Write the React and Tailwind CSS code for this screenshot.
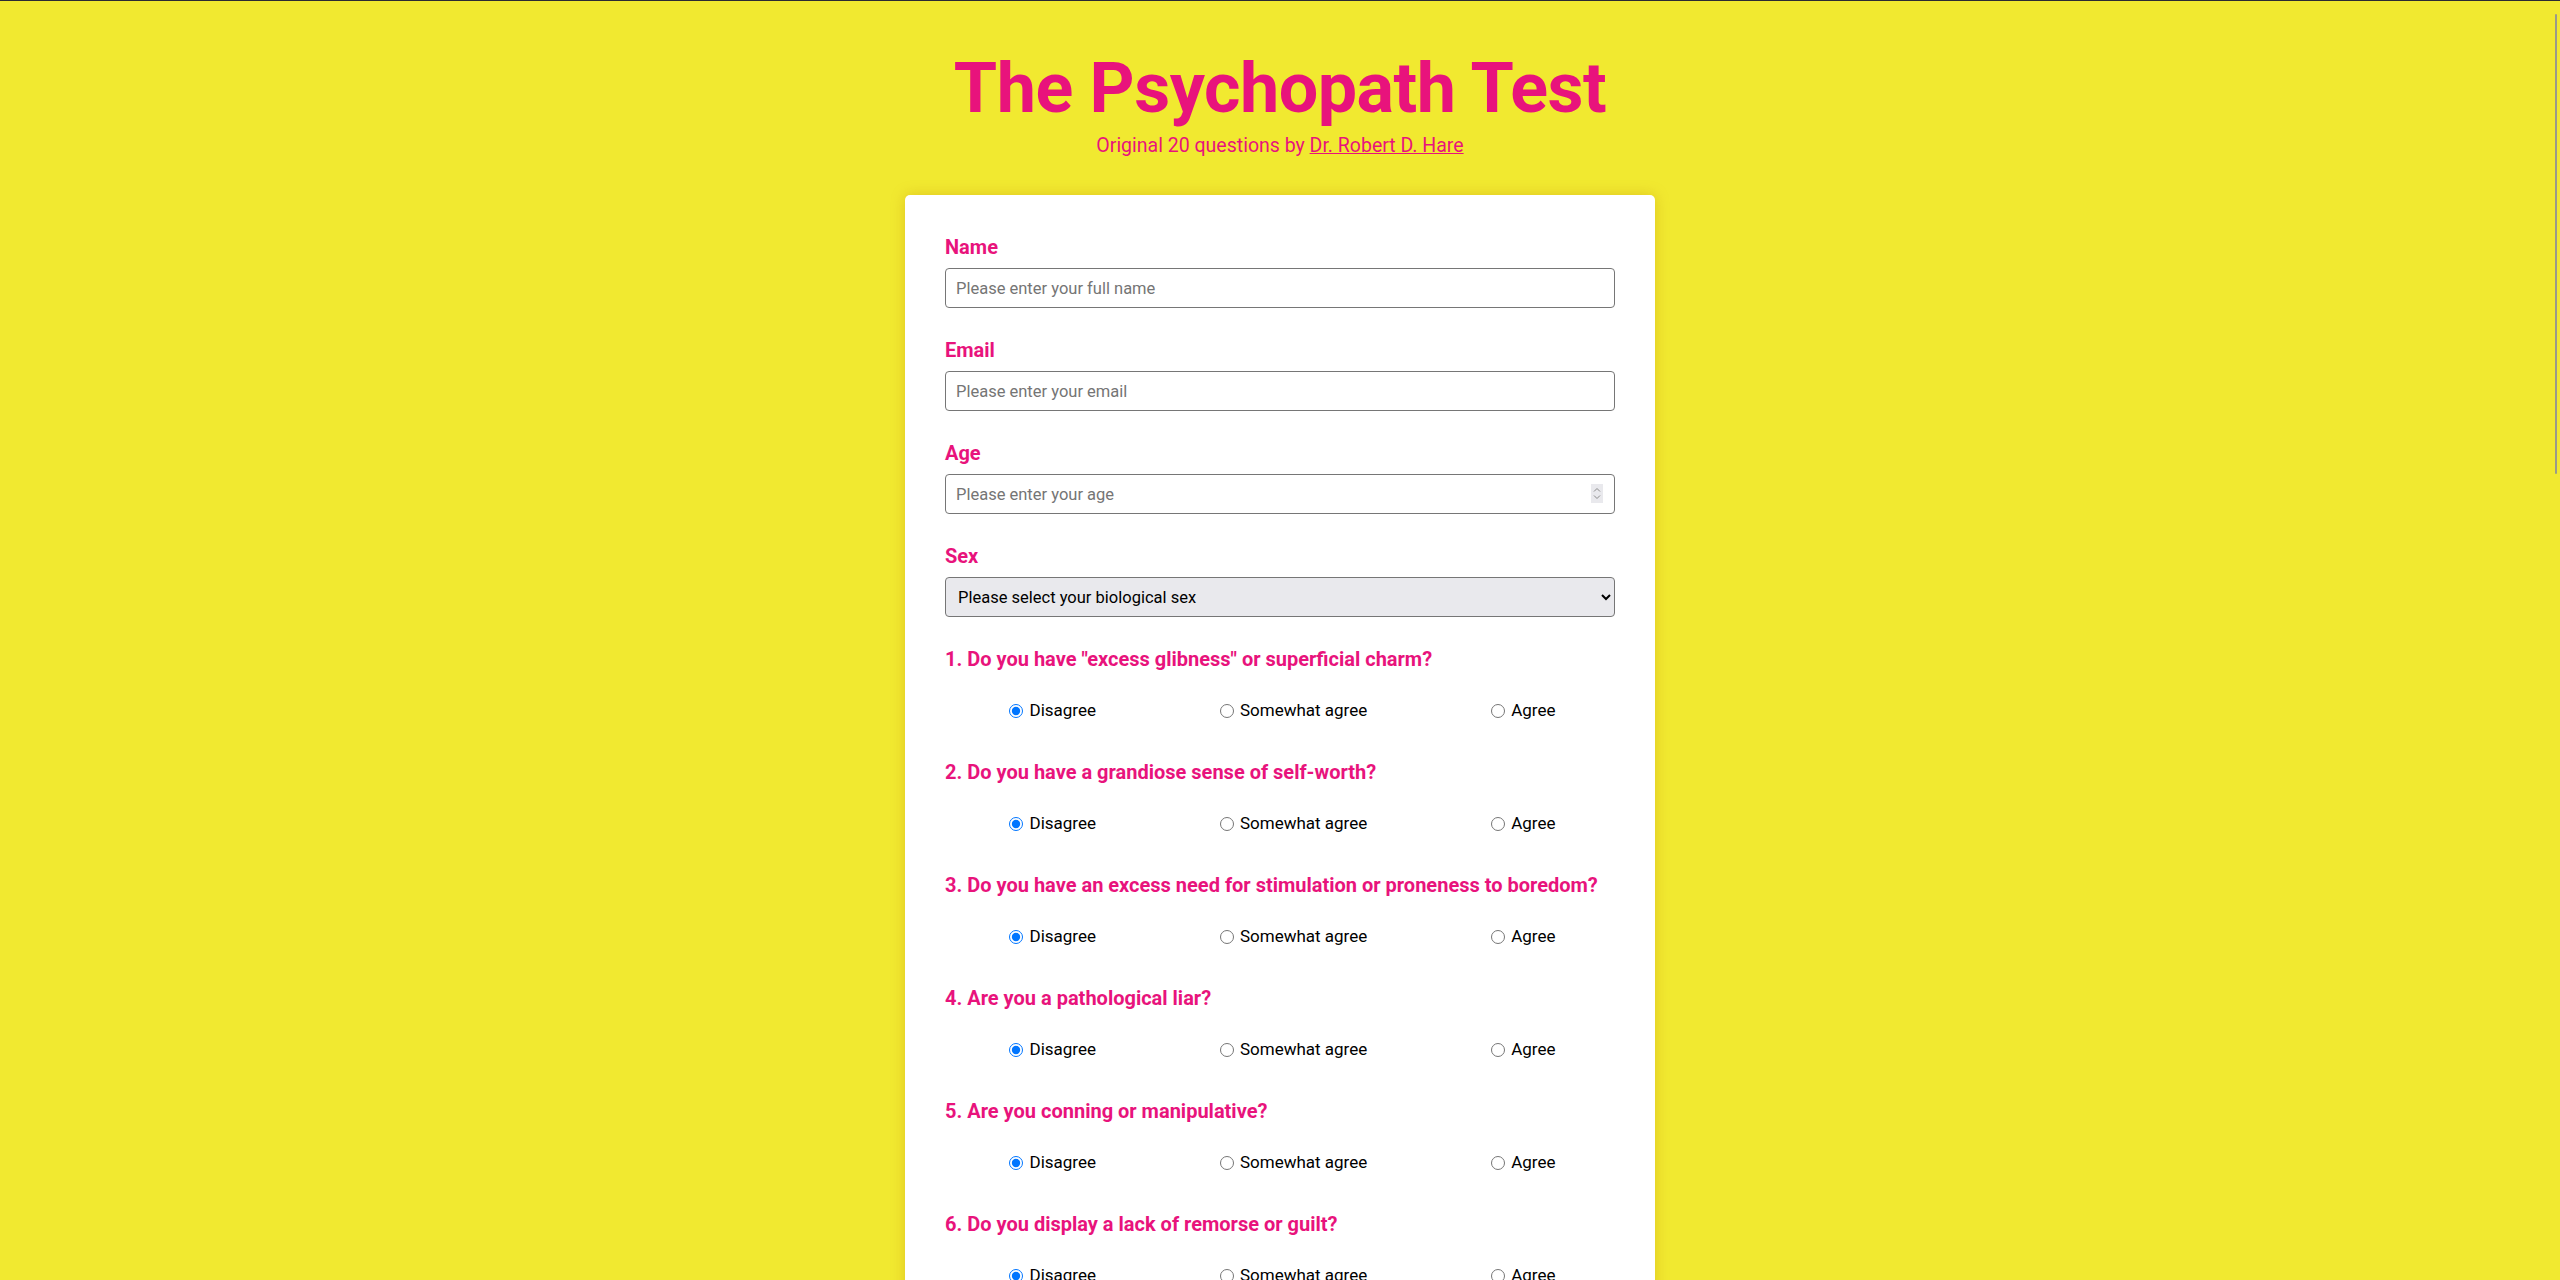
import { useState } from 'react';

const questions = [
    'Do you have "excess glibness" or superficial charm?',
    'Do you have a grandiose sense of self-worth?',
    'Do you have an excess need for stimulation or proneness to boredom?',
    'Are you a pathological liar?',
    'Are you conning or manipulative?',
    'Do you display a lack of remorse or guilt?',
    'Do you have shallow emotional responses?',
    'Are you callous or lacking empathy?',
    'Do you have a parasitic lifestyle?',
    'Do you have poor behavioral controls?',
    'Are you sexually promiscuous?',
    'Did you have early behavior problems?',
    'Do you lack realistic long-term goals?',
    'Are you impulsive?',
    'Are you irresponsible?',
    'Do you fail to accept responsibility for your own actions?',
    'Have you had many short-term marital relationships?',
    'Were you a juvenile delinquent?',
    'Have you had your conditional release revoked?',
    'Do you have criminal versatility?',
];

const options = ['Disagree', 'Somewhat agree', 'Agree'];

function Field({ label, children }) {
    return (
        <div className="mb-[31px]">
            <label className="block text-[20px] leading-[22px] font-bold text-[#e8137c] mb-[10px]">{label}</label>
            {children}
        </div>
    );
}

export default function App() {
    const [answers, setAnswers] = useState(() => questions.map(() => 0));

    const inputClass =
        'w-full h-[40px] px-[10px] rounded-[4px] border border-[#767676] bg-white text-[16.5px] text-black placeholder:text-[#757575] outline-none';

    return (
        <div
            className="relative h-screen overflow-hidden bg-[#f1e930] border-t border-[#2b2a33]"
            style={{ fontFamily: 'Roboto, "Noto Sans", sans-serif' }}
        >
            {/* fake overlay scrollbar */}
            <div className="absolute right-[3px] top-[13px] w-[2px] h-[460px] bg-[#9a9a8a] rounded-full" />

            <div className="flex flex-col items-center pt-[47px] pb-20">
                <h1 className="text-[70px] leading-[80px] font-bold text-[#e8137c] tracking-[-0.5px]">The Psychopath Test</h1>
                <p className="mt-[6px] text-[19.5px] leading-[24px] text-[#e8137c]">
                    Original 20 questions by <a href="#" className="underline">Dr. Robert D. Hare</a>
                </p>

                <form className="mt-[37px] w-[750px] bg-white rounded-[5px] px-[40px] pt-[41px] pb-10 shadow-[0_0_14px_rgba(190,130,0,0.35)]">
                    <Field label="Name">
                        <input type="text" className={inputClass} placeholder="Please enter your full name" />
                    </Field>
                    <Field label="Email">
                        <input type="email" className={inputClass} placeholder="Please enter your email" />
                    </Field>
                    <Field label="Age">
                        <div className="relative">
                            <input
                                type="number"
                                className={`${inputClass} [appearance:textfield] [&::-webkit-inner-spin-button]:appearance-none [&::-webkit-outer-spin-button]:appearance-none`}
                                placeholder="Please enter your age"
                            />
                            {/* spinner */}
                            <div className="absolute right-[12px] top-[10px] w-[12px] h-[19px] bg-[#e9e9ed] flex flex-col items-center justify-center gap-[3px]">
                                <svg width="8" height="5" viewBox="0 0 8 5" fill="none" stroke="#8a8a8a" strokeWidth="1">
                                    <path d="M1 4.5L4 1.5L7 4.5" />
                                </svg>
                                <svg width="8" height="5" viewBox="0 0 8 5" fill="none" stroke="#8a8a8a" strokeWidth="1">
                                    <path d="M1 0.5L4 3.5L7 0.5" />
                                </svg>
                            </div>
                        </div>
                    </Field>
                    <Field label="Sex">
                        <select className="w-full h-[40px] px-[8px] rounded-[4px] border border-[#767676] bg-[#e9e9ed] text-[16.5px] text-black">
                            <option>Please select your biological sex</option>
                            <option>Male</option>
                            <option>Female</option>
                        </select>
                    </Field>

                    {questions.map((q, i) => (
                        <div key={i} className="mb-[39px]">
                            <h3 className="text-[20px] leading-[22px] font-bold text-[#e8137c] mb-[30px]">
                                {i + 1}. {q}
                            </h3>
                            <div className="flex justify-around h-[22px] items-center">
                                {options.map((o, j) => (
                                    <label key={o} className="flex items-center gap-[6px] text-[17px] text-black">
                                        <input
                                            type="radio"
                                            name={`q${i}`}
                                            checked={answers[i] === j}
                                            onChange={() => setAnswers(a => a.map((v, k) => (k === i ? j : v)))}
                                            className="w-[14px] h-[14px] ml-[5px]"
                                        />
                                        {o}
                                    </label>
                                ))}
                            </div>
                        </div>
                    ))}
                </form>
            </div>
        </div>
    );
}
